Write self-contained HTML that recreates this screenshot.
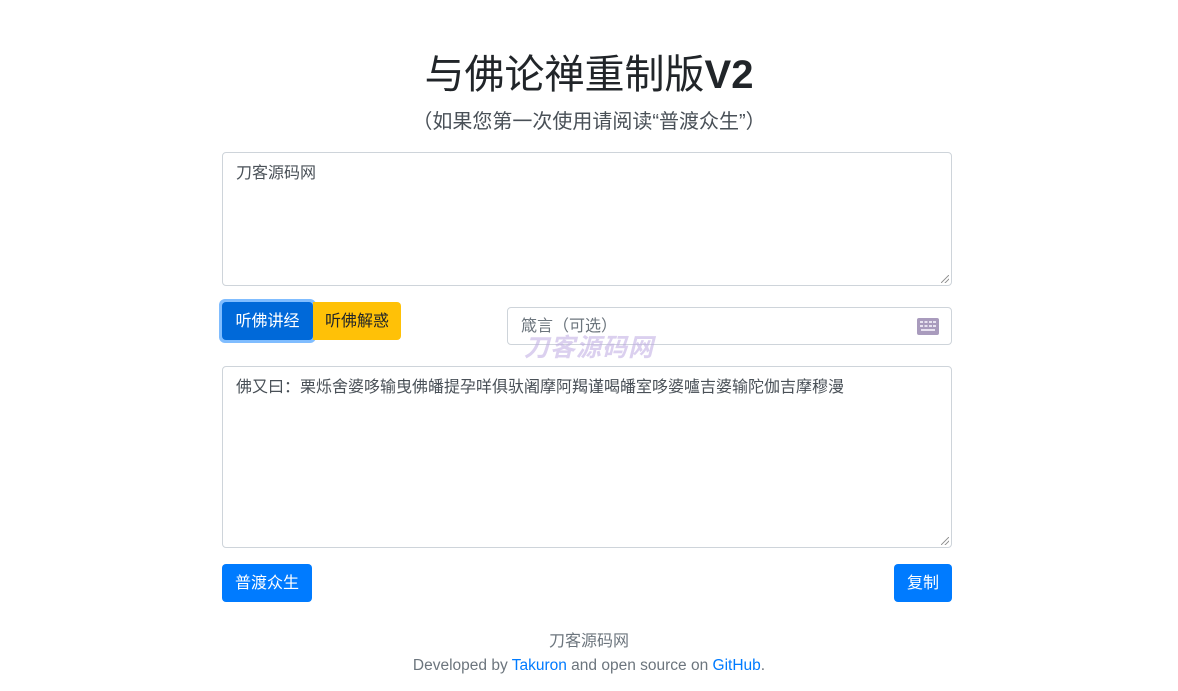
<!DOCTYPE html>
<html><head><meta charset="utf-8"><style>
*{box-sizing:border-box;margin:0;padding:0}
body{width:1178px;height:691px;background:#fff;font-family:"Liberation Sans","Noto Sans CJK SC",sans-serif;color:#212529;position:relative;overflow:hidden}
.abs{position:absolute}
h1{position:absolute;left:0;width:1178px;top:50px;text-align:center;font-size:40px;font-weight:normal;line-height:50px}
.sub{left:0;width:1178px;top:108px;text-align:center;font-size:20px;color:#495057;line-height:28px}
.ta{border:1px solid #ced4da;border-radius:4px;background:#fff;font-size:16px;color:#495057;padding:10px 13px;line-height:22px}
.btn{border-radius:4px;color:#fff;font-size:16px;text-align:center;line-height:40px;height:38px}
.grip{position:absolute;right:2px;bottom:2px;width:8px;height:8px;background:linear-gradient(135deg,transparent 45%,#999 45%,#999 55%,transparent 55%,transparent 70%,#999 70%,#999 80%,transparent 80%)}
a{color:#007bff;text-decoration:none}
</style></head><body>
<h1>与佛论禅重制版<b>V2</b></h1>
<div class="abs sub">（如果您第一次使用请阅读“普渡众生”）</div>
<div class="abs ta" style="left:222px;top:152px;width:730px;height:134px;color:#495057">刀客源码网<div class="grip"></div></div>
<div class="abs" style="left:219px;top:299px;width:97px;height:44px;border-radius:6px;background:#80bdff"></div>
<div class="abs btn" style="left:222px;top:302px;width:91px;background:#0069d9">听佛讲经</div>
<div class="abs btn" style="left:313px;top:302px;width:88px;background:#ffc107;color:#212529;border-radius:0 4px 4px 0">听佛解惑</div>
<div class="abs ta" style="left:507px;top:307px;width:445px;height:38px;padding:9px 13px;line-height:20px;color:#6c757d">箴言（可选）</div>
<svg class="abs" style="left:917px;top:318px" width="22" height="17" viewBox="0 0 22 17"><rect width="22" height="17" rx="2" fill="#a99bbd"/><g fill="#e8e2f0"><rect x="3" y="3" width="3" height="2"/><rect x="7.5" y="3" width="3" height="2"/><rect x="12" y="3" width="3" height="2"/><rect x="16" y="3" width="3" height="2"/><rect x="3" y="7" width="3" height="2"/><rect x="7.5" y="7" width="3" height="2"/><rect x="12" y="7" width="3" height="2"/><rect x="16" y="7" width="3" height="2"/><rect x="4" y="11" width="14" height="2"/></g></svg>
<div class="abs" style="left:524px;top:333px;font-size:25px;font-style:italic;font-weight:bold;color:rgba(190,170,225,0.55);letter-spacing:1px;line-height:30px">刀客源码网</div>
<div class="abs ta" style="left:222px;top:366px;width:730px;height:182px">佛又曰：栗烁舍婆哆输曳佛皤提孕咩俱驮阇摩阿羯谨喝皤室哆婆嚧吉婆输陀伽吉摩穆漫<div class="grip"></div></div>
<div class="abs btn" style="left:222px;top:564px;width:90px;background:#007bff">普渡众生</div>
<div class="abs btn" style="left:894px;top:564px;width:58px;background:#007bff">复制</div>
<div class="abs" style="left:0;width:1178px;top:631px;text-align:center;font-size:16px;color:#6c757d;line-height:22px">刀客源码网</div>
<div class="abs" style="left:0;width:1178px;top:655px;text-align:center;font-size:15.5px;color:#6c757d;line-height:22px">Developed by <a href="#">Takuron</a> and open source on <a href="#">GitHub</a>.</div>
</body></html>
